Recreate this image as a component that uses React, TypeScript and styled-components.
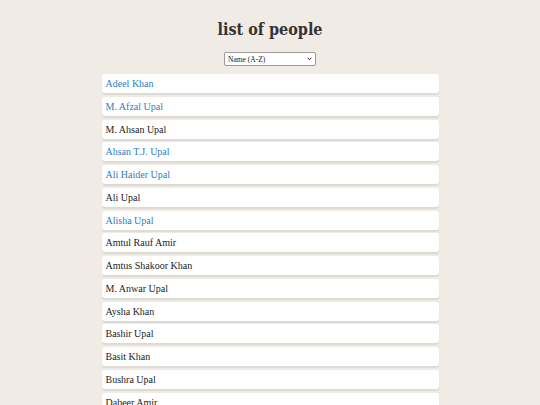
import React, { useState } from 'react'
import styled, { createGlobalStyle } from 'styled-components'

const GlobalStyle = createGlobalStyle`
  html, body {
    margin: 0;
    padding: 0;
    background: #f0ece5;
  }
  body {
    font-family: "DejaVu Serif", "Liberation Serif", serif;
    color: #222;
  }
`

const Page = styled.div`
  display: flex;
  flex-direction: column;
  align-items: center;
  padding-top: 18px;
`

const Title = styled.h1`
  margin: 0;
  line-height: 24px;
  font-family: "DejaVu Serif Condensed", "DejaVu Serif", serif;
  font-size: 16px;
  font-weight: bold;
  color: #333;
`

const SelectWrap = styled.div`
  position: relative;
  margin: 10px 0 8px;
`

const Select = styled.select`
  display: block;
  appearance: none;
  width: 92px;
  height: 14px;
  font-family: "Liberation Serif", serif;
  font-size: 7.5px;
  padding: 0 3px;
  border: 1px solid #9a9a9a;
  border-radius: 2px;
  background: #fff;
  color: #222;
`

const Chevron = styled.svg`
  position: absolute;
  right: 4px;
  top: 5px;
  width: 5px;
  height: 4px;
  pointer-events: none;
`

const List = styled.ul`
  list-style: none;
  margin: 0;
  padding: 0;
  width: 337px;
  display: flex;
  flex-direction: column;
  gap: 3.75px;
`

const Item = styled.li<{ $linked: boolean }>`
  height: 19px;
  display: flex;
  align-items: center;
  padding: 0 4px;
  background: #fff;
  border-radius: 3px;
  box-shadow: 0 1.5px 1px rgba(0, 0, 0, 0.08);
  font-family: "Liberation Serif", serif;
  font-size: 10px;
  color: ${(p) => (p.$linked ? '#2f7bc2' : '#222')};
`

const people: { name: string; linked: boolean }[] = [
  { name: 'Adeel Khan', linked: true },
  { name: 'M. Afzal Upal', linked: true },
  { name: 'M. Ahsan Upal', linked: false },
  { name: 'Ahsan T.J. Upal', linked: true },
  { name: 'Ali Haider Upal', linked: true },
  { name: 'Ali Upal', linked: false },
  { name: 'Alisha Upal', linked: true },
  { name: 'Amtul Rauf Amir', linked: false },
  { name: 'Amtus Shakoor Khan', linked: false },
  { name: 'M. Anwar Upal', linked: false },
  { name: 'Aysha Khan', linked: false },
  { name: 'Bashir Upal', linked: false },
  { name: 'Basit Khan', linked: false },
  { name: 'Bushra Upal', linked: false },
  { name: 'Dabeer Amir', linked: false },
  { name: 'Fatima Khan', linked: false },
]

export default function App() {
  const [sort, setSort] = useState('name-asc')
  return (
    <>
      <GlobalStyle />
      <Page>
        <Title>list of people</Title>
        <SelectWrap>
          <Select value={sort} onChange={(e) => setSort(e.target.value)}>
            <option value="name-asc">Name (A-Z)</option>
            <option value="name-desc">Name (Z-A)</option>
          </Select>
          <Chevron viewBox="0 0 5 4">
            <path d="M0.6 0.8 L2.5 2.8 L4.4 0.8" fill="none" stroke="#333" strokeWidth="1" />
          </Chevron>
        </SelectWrap>
        <List>
          {people.map((p) => (
            <Item key={p.name} $linked={p.linked}>
              {p.name}
            </Item>
          ))}
        </List>
      </Page>
    </>
  )
}
